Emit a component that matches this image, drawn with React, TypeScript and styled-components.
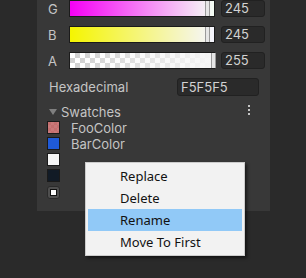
import React, { FC } from "react";
import styled, { createGlobalStyle } from "styled-components";

const GlobalStyle = createGlobalStyle`
  html, body {
    margin: 0;
    padding: 0;
    background: #2a2a2a;
    width: 306px;
    height: 278px;
    overflow: hidden;
  }
  body {
    font-family: Inter, "Noto Sans", sans-serif;
  }
`;

const Stage = styled.div`
  position: relative;
  width: 306px;
  height: 278px;
`;

const Panel = styled.section`
  margin-left: 37px;
  width: 233px;
  height: 211px;
  background: #383838;
  box-sizing: border-box;
  padding: 0 11px 0 10px;
  display: flex;
  flex-direction: column;
`;

const ChannelRow = styled.div`
  display: grid;
  grid-template-columns: 16px 146px 44px;
  column-gap: 6px;
  align-items: center;
  height: 17px;
  margin-bottom: 9px;
`;

const Label = styled.span`
  color: #c4c4c4;
  font-size: 13px;
  padding-left: 1px;
`;

const SliderTrack = styled.div<{ $bg: string; $checker?: boolean }>`
  position: relative;
  height: 17px;
  box-sizing: border-box;
  border: 1px solid #1b1b1b;
  background: ${(p) => p.$bg}
    ${(p) =>
      p.$checker
        ? `, repeating-conic-gradient(#cfcfcf 0 25%, #ffffff 0 50%) 0 0 / 10px 10px`
        : ""};
`;

const Handle = styled.div`
  position: absolute;
  top: 0;
  bottom: 0;
  width: 3px;
  background: #e6e6e6;
  border: 1px solid #9a9a9a;
  border-top: none;
  border-bottom: none;
`;

const NumberField = styled.div<{ $width?: number }>`
  height: 17px;
  width: ${(p) => p.$width ?? 44}px;
  box-sizing: border-box;
  background: #2a2a2a;
  border: 1px solid #212121;
  border-radius: 3px;
  color: #d2d2d2;
  font-size: 13px;
  line-height: 15px;
  padding-left: 3px;
`;

const HexRow = styled.div`
  display: flex;
  justify-content: space-between;
  align-items: center;
  height: 18px;
  padding-left: 1px;
`;

const SwatchHeader = styled.div`
  display: flex;
  align-items: center;
  height: 16px;
  margin-top: 8px;
  color: #c4c4c4;
  font-size: 13px;
`;

const Foldout = styled.span`
  width: 0;
  height: 0;
  margin: 0 4px 0 2px;
  border-left: 4px solid transparent;
  border-right: 4px solid transparent;
  border-top: 6px solid #7f7f7f;
`;

const MoreDots = styled.div`
  margin-left: auto;
  margin-right: 9px;
  margin-top: -4px;
  display: flex;
  flex-direction: column;
  gap: 2px;
  & > span {
    width: 2px;
    height: 2px;
    background: #c4c4c4;
  }
`;

const SwatchList = styled.div`
  display: flex;
  flex-direction: column;
  gap: 3px;
  margin-top: 1px;
`;

const SwatchRow = styled.div`
  display: flex;
  align-items: center;
  height: 13px;
  color: #c4c4c4;
  font-size: 13px;
`;

const Chip = styled.div<{ $color: string; $alpha?: boolean }>`
  width: 13px;
  height: 13px;
  box-sizing: border-box;
  border: 1px solid #1a1a1a;
  margin-right: 11px;
  background: ${(p) =>
    p.$alpha
      ? `linear-gradient(${p.$color}, ${p.$color}), repeating-conic-gradient(#cc9a9a 0 25%, #b77070 0 50%) 0 0 / 6px 6px`
      : p.$color};
`;

const AddButton = styled.div`
  width: 13px;
  height: 13px;
  box-sizing: border-box;
  background: #4f4f4f;
  border: 1px solid #2a2a2a;
  border-radius: 3px;
  display: flex;
  align-items: center;
  justify-content: center;
  margin-top: 1px;
  & > span {
    width: 7px;
    height: 7px;
    box-sizing: border-box;
    background: #fafafa;
    border: 1px solid #111;
  }
`;

const Menu = styled.ul`
  position: absolute;
  left: 85px;
  top: 162px;
  width: 160px;
  margin: 0;
  padding: 2px;
  box-sizing: border-box;
  list-style: none;
  background: #f2f2f2;
  border: 1px solid #cccccc;
  box-shadow: 2px 2px 3px rgba(0, 0, 0, 0.55);
  font-family: "Noto Sans", "Open Sans", sans-serif;
`;

const MenuItem = styled.li<{ $active?: boolean }>`
  height: 22px;
  line-height: 22px;
  padding-left: 32px;
  font-size: 13px;
  color: #111;
  background: ${(p) => (p.$active ? "#91c9f7" : "transparent")};
`;

type Channel = {
  label: string;
  value: number;
  bg: string;
  handle: number;
  checker?: boolean;
};

const channels: Channel[] = [
  {
    label: "G",
    value: 245,
    bg: "linear-gradient(to right, rgb(245,0,245), rgb(245,255,245))",
    handle: 135,
  },
  {
    label: "B",
    value: 245,
    bg: "linear-gradient(to right, rgb(245,245,0), rgb(245,245,255))",
    handle: 135,
  },
  {
    label: "A",
    value: 255,
    bg: "linear-gradient(to right, rgba(245,245,245,0), rgb(245,245,245))",
    handle: 141,
    checker: true,
  },
];

const swatches = [
  { color: "rgba(200,110,110,0.75)", name: "FooColor", alpha: true },
  { color: "#1f5ad8", name: "BarColor" },
  { color: "#f5f5f5", name: "" },
  { color: "#121b26", name: "" },
];

const App: FC = () => {
  return (
    <Stage>
      <GlobalStyle />
      <Panel>
        {channels.map((c) => (
          <ChannelRow key={c.label}>
            <Label>{c.label}</Label>
            <SliderTrack $bg={c.bg} $checker={c.checker}>
              <Handle style={{ left: c.handle }} />
            </SliderTrack>
            <NumberField>{c.value}</NumberField>
          </ChannelRow>
        ))}
        <HexRow>
          <Label>Hexadecimal</Label>
          <NumberField $width={82} style={{ height: 18, lineHeight: "16px" }}>
            F5F5F5
          </NumberField>
        </HexRow>
        <SwatchHeader>
          <Foldout />
          Swatches
          <MoreDots>
            <span />
            <span />
            <span />
          </MoreDots>
        </SwatchHeader>
        <SwatchList>
          {swatches.map((s, i) => (
            <SwatchRow key={i}>
              <Chip $color={s.color} $alpha={s.alpha} />
              {s.name}
            </SwatchRow>
          ))}
          <AddButton>
            <span />
          </AddButton>
        </SwatchList>
      </Panel>
      <Menu>
        <MenuItem>Replace</MenuItem>
        <MenuItem>Delete</MenuItem>
        <MenuItem $active>Rename</MenuItem>
        <MenuItem>Move To First</MenuItem>
      </Menu>
    </Stage>
  );
};

export default App;
